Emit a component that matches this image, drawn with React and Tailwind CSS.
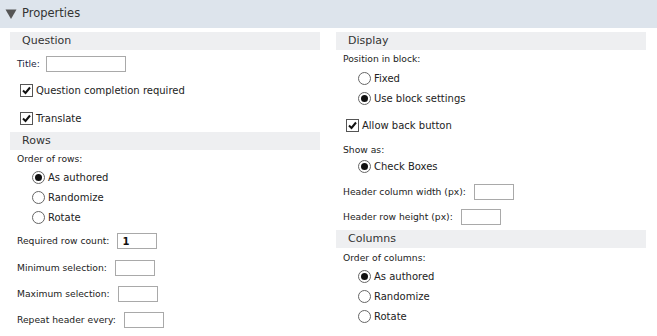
import React from "react";

// little old-school form controls
function Check({ checked }) {
  return (
    <span className="inline-flex w-[13px] h-[13px] border border-[#555] bg-white items-center justify-center shrink-0">
      {checked && (
        <svg width="9" height="9" viewBox="0 0 9 9">
          <path d="M1 4.5 L3.5 7 L8 1.5" fill="none" stroke="#111" strokeWidth="2" />
        </svg>
      )}
    </span>
  );
}

function Radio({ checked }) {
  return (
    <span className="inline-flex w-[13px] h-[13px] rounded-full border border-[#666] bg-white items-center justify-center shrink-0">
      {checked && <span className="w-[7px] h-[7px] rounded-full bg-[#111]" />}
    </span>
  );
}

function Box({ value, w = "w-[40px]" }) {
  return (
    <span
      className={`inline-flex ${w} h-[16px] border border-[#a9a9a9] bg-white items-center pl-[4px] text-[10px] font-bold text-[#111]`}
    >
      {value}
    </span>
  );
}

function Bar({ title }) {
  return (
    <div className="h-[18px] bg-[#eeeff1] pl-[12px] flex items-center text-[11px] text-[#333]">
      {title}
    </div>
  );
}

function Label({ text, h, children }) {
  return (
    <div className={`${h} flex items-center pl-[7px] text-[9.2px] text-[#222]`}>
      <span>{text}</span>
      {children}
    </div>
  );
}

function Opt({ kind, checked, text, h, pl }) {
  return (
    <div className={`${h} flex items-center ${pl} text-[10px] text-[#222]`}>
      {kind === "radio" ? <Radio checked={checked} /> : <Check checked={checked} />}
      <span className="ml-[3px]">{text}</span>
    </div>
  );
}

export default function App() {
  return (
    <div className="w-[657px] h-[336px] bg-white overflow-hidden font-['DejaVu_Sans',sans-serif]">
      {/* Header */}
      <div className="h-[28px] bg-[#dde4ec] flex items-center pl-[5px] text-[11.5px] text-[#333]">
        <svg width="12" height="12" viewBox="0 0 12 12" className="mr-[5px]">
          <path d="M0.5 1.5 L11.5 1.5 L6 11 Z" fill="#555" />
        </svg>
        Properties
      </div>

      <div className="flex gap-[16px] pl-[10px] pt-[4px]">
        {/* Left column */}
        <div className="w-[310px] flex flex-col">
          <Bar title="Question" />
          <div className="h-[27px] flex items-center pt-[1px] pl-[7px] text-[9.2px] text-[#1c2540]">
            <span>Title:</span>
            <span className="ml-[6px] flex">
              <Box w="w-[80px]" />
            </span>
          </div>
          <Opt kind="check" checked text="Question completion required" h="h-[27px]" pl="pl-[10px]" />
          <Opt kind="check" checked text="Translate" h="h-[28px]" pl="pl-[10px]" />

          <Bar title="Rows" />
          <Label text="Order of rows:" h="h-[17px]" />
          <Opt kind="radio" checked text="As authored" h="h-[20px]" pl="pl-[22px]" />
          <Opt kind="radio" text="Randomize" h="h-[20px]" pl="pl-[22px]" />
          <Opt kind="radio" text="Rotate" h="h-[20px]" pl="pl-[22px]" />
          <Label text="Required row count:" h="h-[28px]">
            <span className="ml-[8px] flex">
              <Box value="1" />
            </span>
          </Label>
          <Label text="Minimum selection:" h="h-[26px]">
            <span className="ml-[8px] flex">
              <Box />
            </span>
          </Label>
          <Label text="Maximum selection:" h="h-[26px]">
            <span className="ml-[8px] flex">
              <Box />
            </span>
          </Label>
          <Label text="Repeat header every:" h="h-[26px]">
            <span className="ml-[8px] flex">
              <Box />
            </span>
          </Label>
        </div>

        {/* Right column */}
        <div className="w-[310px] flex flex-col">
          <Bar title="Display" />
          <Label text="Position in block:" h="h-[18px]" />
          <Opt kind="radio" text="Fixed" h="h-[20px]" pl="pl-[22px]" />
          <Opt kind="radio" checked text="Use block settings" h="h-[20px]" pl="pl-[22px]" />
          <Opt kind="check" checked text="Allow back button" h="h-[35px]" pl="pl-[10px]" />
          <Label text="Show as:" h="h-[13px]" />
          <Opt kind="radio" checked text="Check Boxes" h="h-[21px]" pl="pl-[22px]" />
          <Label text="Header column width (px):" h="h-[29px]">
            <span className="ml-[8px] flex">
              <Box />
            </span>
          </Label>
          <Label text="Header row height (px):" h="h-[22px]">
            <span className="ml-[8px] flex">
              <Box />
            </span>
          </Label>
          <div className="mt-[2px]">
            <Bar title="Columns" />
          </div>
          <Label text="Order of columns:" h="h-[19px]" />
          <Opt kind="radio" checked text="As authored" h="h-[19px]" pl="pl-[22px]" />
          <Opt kind="radio" text="Randomize" h="h-[20px]" pl="pl-[22px]" />
          <Opt kind="radio" text="Rotate" h="h-[20px]" pl="pl-[22px]" />
        </div>
      </div>
    </div>
  );
}
